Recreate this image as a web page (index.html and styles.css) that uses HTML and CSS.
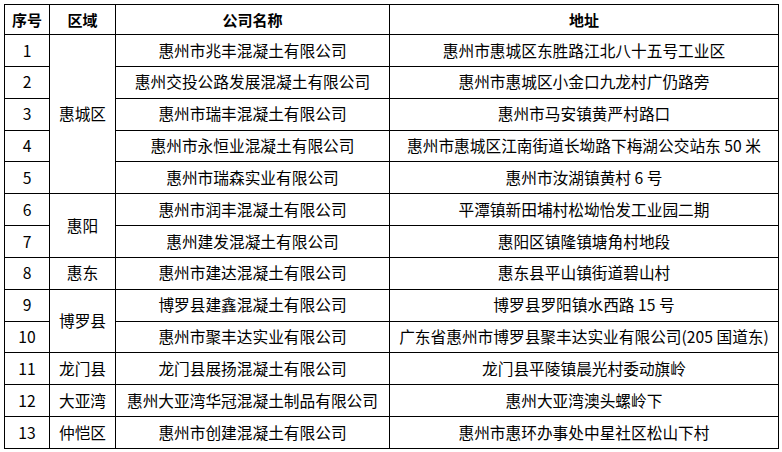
FILE: index.html
```html
<!DOCTYPE html>
<html lang="zh-CN">
<head>
<meta charset="utf-8">
<title>混凝土企业名单</title>
<link rel="stylesheet" href="styles.css">
</head>
<body>
<table class="list">
  <colgroup>
    <col class="c-no">
    <col class="c-area">
    <col class="c-name">
    <col class="c-addr">
  </colgroup>
  <thead>
    <tr class="head">
      <th>序号</th><th>区域</th><th>公司名称</th><th>地址</th>
    </tr>
  </thead>
  <tbody>
    <tr><td>1</td><td rowspan="5">惠城区</td><td>惠州市兆丰混凝土有限公司</td><td>惠州市惠城区东胜路江北八十五号工业区</td></tr>
    <tr><td>2</td><td>惠州交投公路发展混凝土有限公司</td><td>惠州市惠城区小金口九龙村广仍路旁</td></tr>
    <tr><td>3</td><td>惠州市瑞丰混凝土有限公司</td><td>惠州市马安镇黄严村路口</td></tr>
    <tr><td>4</td><td>惠州市永恒业混凝土有限公司</td><td>惠州市惠城区江南街道长坳路下梅湖公交站东 50 米</td></tr>
    <tr><td>5</td><td>惠州市瑞森实业有限公司</td><td>惠州市汝湖镇黄村 6 号</td></tr>
    <tr><td>6</td><td rowspan="2">惠阳</td><td>惠州市润丰混凝土有限公司</td><td>平潭镇新田埔村松坳怡发工业园二期</td></tr>
    <tr><td>7</td><td>惠州建发混凝土有限公司</td><td>惠阳区镇隆镇塘角村地段</td></tr>
    <tr><td>8</td><td>惠东</td><td>惠州市建达混凝土有限公司</td><td>惠东县平山镇街道碧山村</td></tr>
    <tr><td>9</td><td rowspan="2">博罗县</td><td>博罗县建鑫混凝土有限公司</td><td>博罗县罗阳镇水西路 15 号</td></tr>
    <tr><td>10</td><td>惠州市聚丰达实业有限公司</td><td>广东省惠州市博罗县聚丰达实业有限公司(205 国道东)</td></tr>
    <tr><td>11</td><td>龙门县</td><td>龙门县展扬混凝土有限公司</td><td>龙门县平陵镇晨光村委动旗岭</td></tr>
    <tr><td>12</td><td>大亚湾</td><td>惠州大亚湾华冠混凝土制品有限公司</td><td>惠州大亚湾澳头螺岭下</td></tr>
    <tr><td>13</td><td>仲恺区</td><td>惠州市创建混凝土有限公司</td><td>惠州市惠环办事处中星社区松山下村</td></tr>
  </tbody>
</table>
</body>
</html>
```
FILE: styles.css
```css
html, body {
  margin: 0;
  padding: 0;
  background: #fff;
}
body {
  padding: 4px 0 0 4px;
  font-family: "Noto Sans CJK SC", "Noto Sans", sans-serif;
  color: #000;
}
.list {
  border-collapse: collapse;
  table-layout: fixed;
  width: 774px;
  font-size: 15.7px;
}
.c-no { width: 45px; }
.c-area { width: 66px; }
.c-name { width: 274px; }
.c-addr { width: 389px; }
.list th,
.list td {
  border: 1px solid #000;
  padding: 0;
  text-align: center;
  vertical-align: middle;
  white-space: nowrap;
  line-height: 1;
}
.list th {
  font-weight: bold;
  font-size: 15px;
}
.list .head { height: 30px; }
.list tbody tr { height: 31.85px; }
```
